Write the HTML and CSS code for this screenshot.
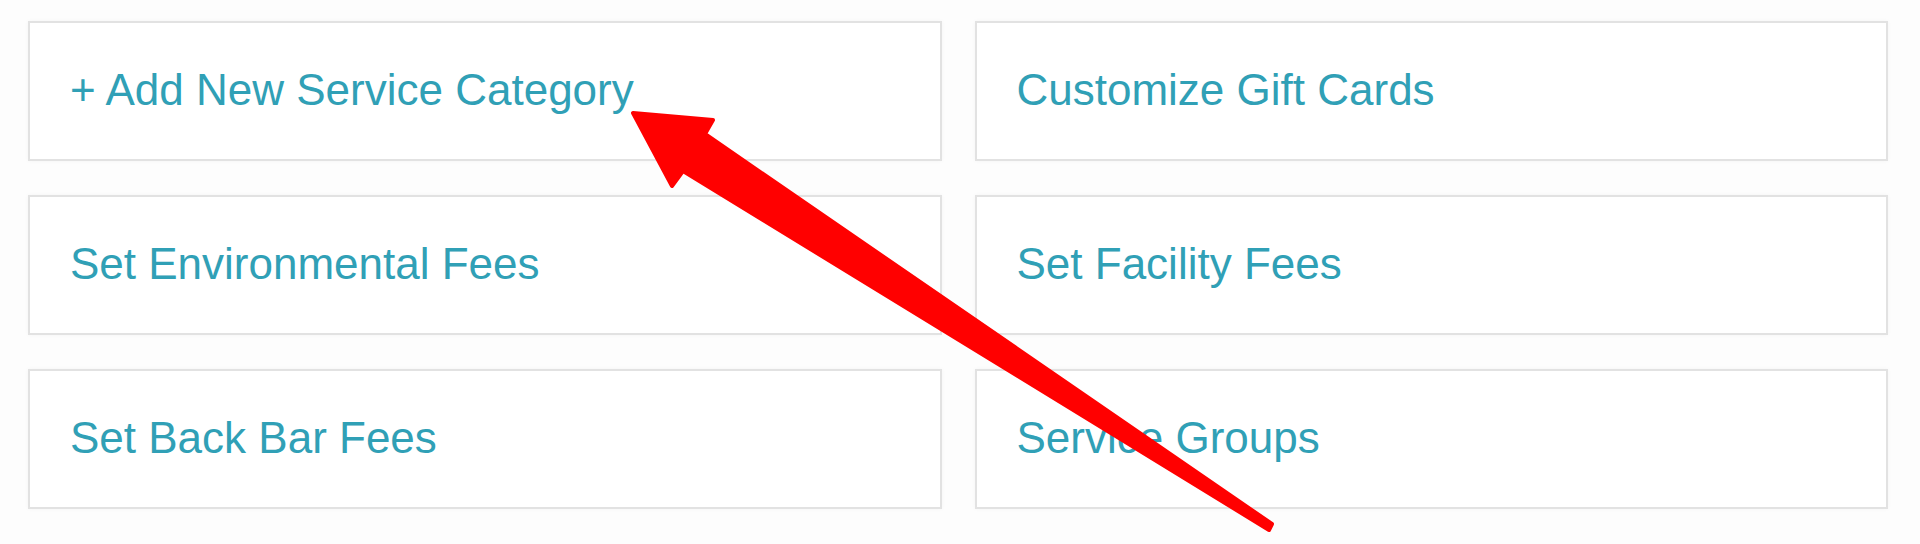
FILE: index.html
```html
<!DOCTYPE html>
<html lang="en">
<head>
  <meta charset="UTF-8">
  <title>Service Settings</title>
  <link rel="stylesheet" href="styles.css">
</head>
<body>
  <div class="settings">
    <a class="tile" href="#">+ Add New Service Category</a>
    <a class="tile" href="#">Customize Gift Cards</a>
    <a class="tile" href="#">Set Environmental Fees</a>
    <a class="tile" href="#">Set Facility Fees</a>
    <a class="tile" href="#">Set Back Bar Fees</a>
    <a class="tile" href="#">Service Groups</a>
  </div>

  <!-- annotation arrow -->
  <svg class="annotation" width="1920" height="544" viewBox="0 0 1920 544">
    <polygon points="633,113 713,120 705,134 1272,524 1269,530 683,171 672,186"
             fill="#ff0000" stroke="#ff0000" stroke-width="4" stroke-linejoin="round"/>
  </svg>
</body>
</html>
```

FILE: styles.css
```css
/* General Styles */
body {
  margin: 0;
  padding: 0;
  background: #fdfdfd;
  font-family: 'Liberation Sans', Arial, sans-serif;
  position: relative;
  height: 544px;
  overflow: hidden;
}

.settings {
  display: grid;
  grid-template-columns: 1fr 1fr;
  column-gap: 33px;
  row-gap: 34px;
  padding: 21px 32px 0 28px;
}

.tile {
  display: flex;
  align-items: center;
  height: 140px;
  box-sizing: border-box;
  padding-left: 40px;
  padding-bottom: 2px;
  background: #fff;
  border: 2px solid #e2e2e2;
  box-shadow: 0 0 4px rgba(0, 0, 0, 0.04);
  color: #30a0b6;
  font-size: 44px;
  text-decoration: none;
}

.annotation {
  position: absolute;
  top: 0;
  left: 0;
  pointer-events: none;
}
```
